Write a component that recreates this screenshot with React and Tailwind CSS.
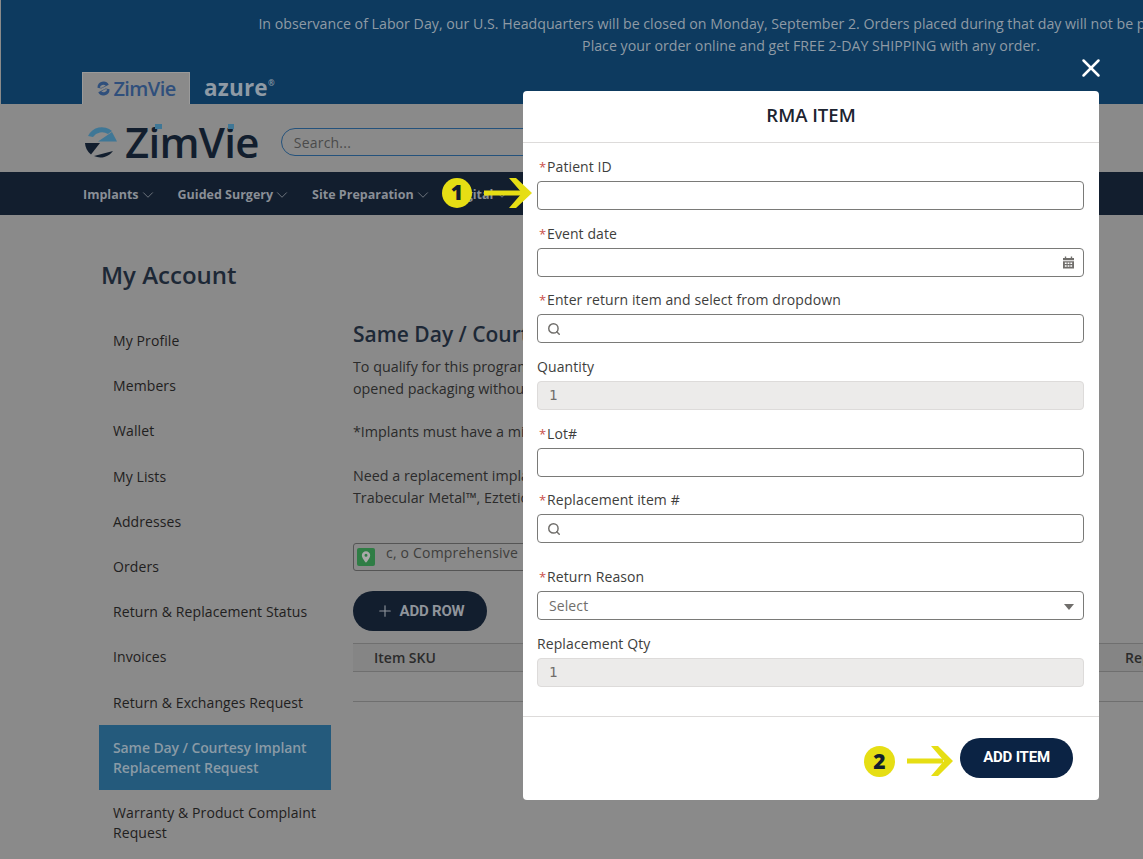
// App.jsx
import React from "react";
import { ChevronDown, Search, X, Plus } from "lucide-react";

const navItems = ["Implants", "Guided Surgery", "Site Preparation", "Digital"];

const sideItems = [
  "My Profile",
  "Members",
  "Wallet",
  "My Lists",
  "Addresses",
  "Orders",
  "Return & Replacement Status",
  "Invoices",
  "Return & Exchanges Request",
];

function LogoMark({ className }) {
  return (
    <svg viewBox="0 0 32 32" className={className}>
      <path d="M3 10 A15.500 15.500 0 0 1 27 5 L23 8 A11 11 0 0 0 8 11 Z" fill="#3f7796" />
      <path d="M13 15.500 L27 6 L32 15.500 Z" fill="#3f7796" />
      <path d="M0 17 L15 17 L6 28.500 A15.500 15.500 0 0 1 0 17 Z" fill="#121e2e" />
      <path d="M9 30 L28 25 A15.500 15.500 0 0 1 9 30 Z" fill="#121e2e" />
    </svg>
  );
}

function SmallMark({ className }) {
  return (
    <svg viewBox="0 0 20 20" className={className}>
      <path d="M2 9 A8 8 0 0 1 17 5 L7 10 Z" fill="#2f4f7c" />
      <path d="M18 11 A8 8 0 0 1 3 15 L13 10 Z" fill="#2f4f7c" />
      <path d="M5 9 A5 5 0 0 1 13 6 L8 9 Z" fill="#8a8a8a" />
      <path d="M15 11 A5 5 0 0 1 7 14 L12 11 Z" fill="#8a8a8a" />
    </svg>
  );
}

function CalendarIcon() {
  return (
    <svg viewBox="0 0 12 13" className="w-[11px] h-[13px]">
      <path d="M2 0h1.500v1.500h5V0H10v1.500h2V4H0V1.500h2z" fill="#706e6b" />
      <path
        d="M0 5h12v8H0z M2 6.500v1.500h2V6.500z M5 6.500v1.500h2V6.500z M8 6.500v1.500h2V6.500z M2 9.500V11h2V9.500z M5 9.500V11h2V9.500z M8 9.500V11h2V9.500z"
        fill="#706e6b"
        fillRule="evenodd"
      />
    </svg>
  );
}

function Label({ text, required }) {
  return (
    <div className="h-[20px] flex items-center text-[14px] tracking-[0.1px] text-[#3e3e3c] leading-5">
      {required && <span className="text-[#c9504a] ml-[2px] mr-[3px] w-[5px] text-[13px]">*</span>}
      {text}
    </div>
  );
}

function Field({ label, required, disabled, value, icon, trailing, placeholder, className }) {
  return (
    <div className={className}>
      <Label text={label} required={required} />
      <div
        className={
          "mt-[4px] h-[29px] rounded-[4px] border flex items-center text-[14px] tracking-[0.1px] " +
          (disabled
            ? "bg-[#ecebea] border-[#dddbda] text-[#706e6b]"
            : "bg-white border-[#7a7a78] text-[#706e6b]")
        }
      >
        {icon && <Search className="ml-[9px] w-[14px] h-[14px] text-[#706e6b]" strokeWidth={2.5} />}
        {value && <span className="pl-[11px] font-['DejaVu_Sans_Mono',monospace] text-[14px]">{value}</span>}
        {placeholder && <span className="pl-[11px]">{placeholder}</span>}
        {trailing && <span className="ml-auto mr-[9px] flex items-center">{trailing}</span>}
      </div>
    </div>
  );
}

export default function App() {
  return (
    <div className="relative w-[1143px] h-[859px] overflow-hidden bg-[#8a8a8a] font-['Open_Sans',sans-serif]">
      {/* top banner */}
      <div className="h-[104px] bg-[#0d3a5f] border-l border-[#8a8a8a] relative">
        <div className="w-[1620px] pt-[13px] text-center text-[14.2px] leading-[21.5px] text-[#8f9aa5]">
          <p className="whitespace-nowrap">
            In observance of Labor Day, our U.S. Headquarters will be closed on Monday, September 2. Orders placed during that day will not be processed until next business day.
          </p>
          <p className="whitespace-nowrap">Place your order online and get FREE 2-DAY SHIPPING with any order.</p>
        </div>
        <div className="absolute left-[81px] bottom-0 flex items-end">
          <div className="w-[108px] h-[32px] bg-[#8a8a8a] border-t border-x border-[#9a9a9a] flex items-center justify-center gap-[2px]">
            <SmallMark className="w-[15px] h-[15px]" />
            <span className="text-[20px] font-semibold text-[#2f4f7c] tracking-[-0.6px]">ZimVie</span>
          </div>
          <div className="h-[32px] ml-[14px] flex items-center text-[#8f9aa5] text-[22.5px] font-bold tracking-[0.2px]">
            azure<span className="text-[8px] -mt-[10px]">®</span>
          </div>
        </div>
      </div>

      {/* logo + search */}
      <div className="h-[68px] flex items-center pl-[85px] pt-[8px]">
        <LogoMark className="w-[32px] h-[32px]" />
        <div className="relative ml-[8px] text-[42px] leading-none font-semibold text-[#121e2e] tracking-[-0.7px]">
          ZimVie
          <span className="absolute left-[30px] top-[3px] w-[7px] h-[5px] bg-[#3f7796]" />
          <span className="absolute left-[103px] top-[3px] w-[6px] h-[5px] bg-[#3f7796]" />
        </div>
        <div className="ml-[22px] w-[400px] h-[28px] rounded-full border border-[#24527c] flex items-center pl-[12px] text-[14px] text-[#4a4a4a] tracking-[0.2px]">
          Search...
        </div>
      </div>

      {/* nav */}
      <div className="h-[43px] bg-[#121e2e] flex items-center pl-[83px] pt-[3px] gap-[21px]">
        {navItems.map((item) => (
          <div key={item} className="flex items-center text-[12.5px] font-bold text-[#8a8f96]">
            {item}
            <ChevronDown className="w-[18px] h-[18px]" strokeWidth={1} />
          </div>
        ))}
      </div>

      {/* account page */}
      <div className="pl-[99px] pt-[43px] flex flex-col">
        <h1 className="pl-[2px] text-[24px] leading-[34px] font-semibold text-[#1d2836]">My Account</h1>
        <div className="flex mt-[26px]">
          <div className="w-[232px] shrink-0">
            {sideItems.map((item) => (
              <div key={item} className="pl-[14px] h-[45.2px] flex items-center text-[14px] font-medium text-[#1f2020] tracking-[0.1px]">
                {item}
              </div>
            ))}
            <div className="h-[65px] bg-[#245a7c] pl-[14px] pt-[2px] flex flex-col justify-center text-[14px] leading-[20px] font-semibold text-[#8a9aa6] tracking-[-0.1px]">
              <span>Same Day / Courtesy Implant</span>
              <span>Replacement Request</span>
            </div>
            <div className="pl-[14px] pt-[13px] text-[14px] leading-[20px] font-medium text-[#1f2020] tracking-[0.1px]">
              Warranty & Product Complaint Request
            </div>
          </div>

          <div className="ml-[22px] w-[790px] mt-[2px] shrink-0">
            <h2 className="text-[21px] leading-[28px] font-semibold text-[#1d2836] whitespace-nowrap">
              Same Day / Courtesy Implant Replacement Request
            </h2>
            <div className="mt-[8px] text-[14.3px] leading-[22px] text-[#2b2b2b] whitespace-nowrap">
              <p>To qualify for this program, implant must be placed and integrated with replacement of an implant b</p>
              <p>opened packaging without a patient event. Program rules apply to all returns.</p>
              <p className="mt-[21px]">*Implants must have a minimum shelf life remaining at the time of return.</p>
              <p className="mt-[22px]">Need a replacement implant outside the program terms? Replacements may be available for an additional fee.</p>
              <p>Trabecular Metal™, Eztetic™ and other implants may qualify under this same program for any implan</p>
            </div>
            <div className="mt-[34px] w-[300px] h-[28px] rounded-[3px] border border-[#555] flex items-center pl-[3px] text-[14px] text-[#3e3e3c] tracking-[0.2px]">
              <span className="w-[18px] h-[18px] rounded-[2px] bg-[#2f7d45] flex items-center justify-center">
                <svg viewBox="0 0 12 14" className="w-[10px] h-[12px]">
                  <path d="M6 0a5 5 0 0 1 5 5c0 3.500-5 9-5 9S1 8.500 1 5a5 5 0 0 1 5-5z M6 3.200a1.800 1.800 0 1 0 0 3.600a1.800 1.800 0 0 0 0-3.600z" fill="#a9a9a9" fillRule="evenodd" />
                </svg>
              </span>
              <span className="ml-[11px] -mt-[9px]">c, o Comprehensive</span>
            </div>
            <div className="mt-[20px] w-[134px] h-[40px] rounded-full bg-[#121e2e] flex items-center justify-center gap-[6px] font-['Roboto',sans-serif] text-[15px] font-bold text-[#8f949b] tracking-[-0.2px]">
              <Plus className="w-[18px] h-[18px]" strokeWidth={1.5} />
              ADD ROW
            </div>
            <div className="mt-[12px] h-[29px] border-y border-[#6f6f6f] flex items-center justify-between pl-[21px] text-[14px] font-semibold text-[#2b2b2b] bg-[#858585]">
              <span>Item SKU</span>
              <span className="w-[18px] overflow-hidden">Rep</span>
            </div>
            <div className="h-[30px] border-b border-[#6f6f6f]" />
          </div>
        </div>
      </div>

      {/* close button */}
      <X className="absolute left-[1076px] top-[53px] w-[30px] h-[30px] text-white" strokeWidth={2} />

      {/* RMA modal */}
      <div className="absolute left-[523px] top-[91px] w-[576px] h-[709px] bg-white rounded-[4px] flex flex-col">
        <div className="h-[52px] shrink-0 border-b border-[#dddbda] pb-[4px] flex items-center justify-center text-[18.5px] font-semibold text-[#1d2430]">
          RMA ITEM
        </div>
        <div className="flex-1 pl-[14px] pr-[15px] pt-[14px]">
          <Field label="Patient ID" required />
          <Field label="Event date" required className="mt-[13.67px]" trailing={<CalendarIcon />} />
          <Field label="Enter return item and select from dropdown" required className="mt-[13.67px]" icon />
          <Field label="Quantity" disabled value="1" className="mt-[13.67px]" />
          <Field label="Lot#" required className="mt-[13.67px]" />
          <Field label="Replacement item #" required className="mt-[13.67px]" icon />
          <Field
            label="Return Reason"
            required
            placeholder="Select"
            className="mt-[24px]"
            trailing={<span className="w-0 h-0 border-x-[5px] border-x-transparent border-t-[6px] border-t-[#706e6b] mt-[2px]" />}
          />
          <Field label="Replacement Qty" disabled value="1" className="mt-[14px]" />
        </div>
        <div className="h-[84px] shrink-0 border-t border-[#dddbda] flex items-center justify-end pr-[26px] pb-[2px]">
          <div className="w-[113px] h-[40px] rounded-full bg-[#0b2344] flex items-center justify-center font-['Roboto',sans-serif] text-[15px] font-bold text-white tracking-[-0.2px]">
            ADD ITEM
          </div>
        </div>
      </div>

      {/* yellow callouts */}
      <div className="absolute left-[442px] top-[178px] w-[30px] h-[30px] rounded-full bg-[#e6de14] flex items-center justify-center text-[21px] font-extrabold text-[#121e2e]">
        1
      </div>
      <svg viewBox="0 0 48 30" className="absolute left-[484px] top-[178px] w-[48px] h-[30px]">
        <rect x="0" y="12.500" width="38" height="5" fill="#e6de14" />
        <path d="M25 0 H32 L48 15 L32 30 H25 L38 15 Z" fill="#e6de14" />
      </svg>
      <div className="absolute left-[864px] top-[746px] w-[31px] h-[31px] rounded-full bg-[#e6de14] flex items-center justify-center text-[21px] font-extrabold text-[#121e2e]">
        2
      </div>
      <svg viewBox="0 0 46 30" className="absolute left-[907px] top-[746px] w-[46px] h-[30px]">
        <rect x="0" y="12.500" width="36" height="5" fill="#e6de14" />
        <path d="M24 0 H31 L46 15 L31 30 H24 L37 15 Z" fill="#e6de14" />
      </svg>
    </div>
  );
}
